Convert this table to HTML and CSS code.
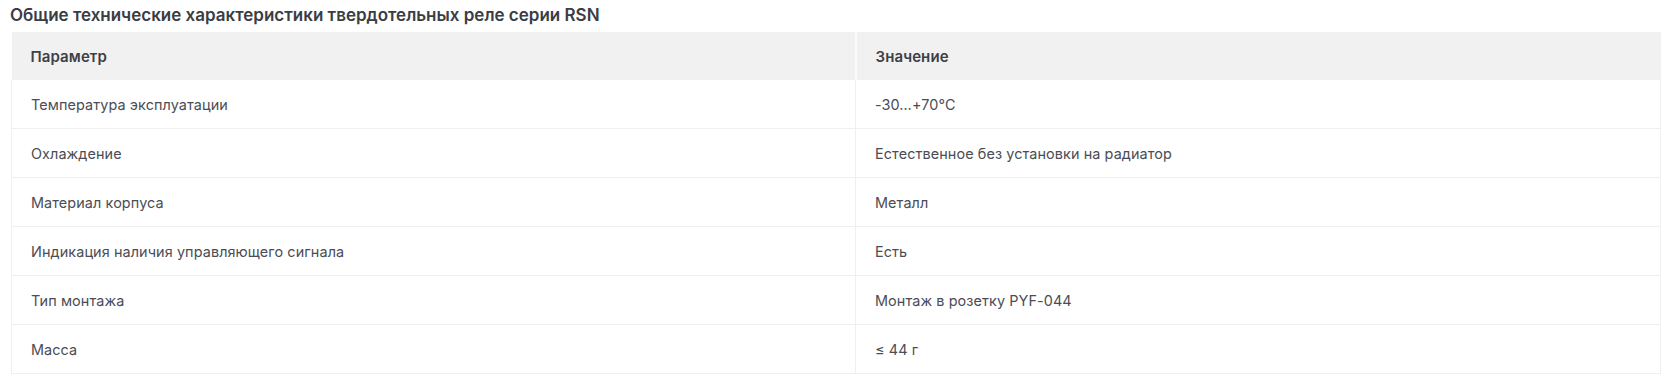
FILE: index.html
```html
<!DOCTYPE html>
<html lang="ru">
<head>
<meta charset="utf-8">
<title>Характеристики RSN</title>
<link rel="stylesheet" href="styles.css">
</head>
<body>
<section class="specs">
  <h3 class="specs-title">Общие технические характеристики твердотельных реле серии RSN</h3>
  <table class="specs-table">
    <colgroup><col class="col-param"><col class="col-value"></colgroup>
    <thead>
      <tr><th>Параметр</th><th>Значение</th></tr>
    </thead>
    <tbody>
      <tr><td>Температура эксплуатации</td><td>-30…+70°C</td></tr>
      <tr><td>Охлаждение</td><td>Естественное без установки на радиатор</td></tr>
      <tr><td>Материал корпуса</td><td>Металл</td></tr>
      <tr><td>Индикация наличия управляющего сигнала</td><td>Есть</td></tr>
      <tr><td>Тип монтажа</td><td>Монтаж в розетку PYF-044</td></tr>
      <tr><td>Масса</td><td>≤ 44 г</td></tr>
    </tbody>
  </table>
</section>
</body>
</html>
```
FILE: styles.css
```css
html, body {
  margin: 0;
  padding: 0;
  background: #ffffff;
}
body {
  font-family: Inter, "Noto Sans", sans-serif;
  color: #44474e;
}
.specs {
  padding: 5px 19px 0 11px;
}
.specs-title {
  margin: 0 0 6px -1px;
  font-size: 17px;
  line-height: 21px;
  font-weight: 600;
  color: #3a3d44;
}
.specs-table {
  width: 100%;
  border-collapse: collapse;
  table-layout: fixed;
  font-size: 14.4px;
  letter-spacing: 0.1px;
}
.col-param { width: 844px; }
.specs-table th {
  background: #f1f1f1;
  text-align: left;
  font-size: 15px;
  font-weight: 600;
  color: #3d4047;
  height: 48px;
  padding: 0 19px;
  border-left: 2px solid #fafafa;
}
.specs-table th:first-child { border-left: none; }
.specs-table td {
  height: 48px;
  padding: 0 19px;
  border: 1px solid #efefef;
  border-top: none;
  color: #4a4d55;
}
```
